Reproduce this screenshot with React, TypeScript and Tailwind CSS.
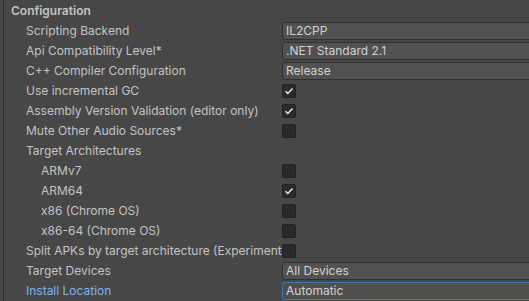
import React from "react";

type Row =
  | { label: string; indent?: boolean; kind: "dropdown"; value: string; focused?: boolean }
  | { label: string; indent?: boolean; kind: "check"; checked: boolean }
  | { label: string; indent?: boolean; kind: "none" };

const rows: Row[] = [
  { label: "Scripting Backend", kind: "dropdown", value: "IL2CPP" },
  { label: "Api Compatibility Level*", kind: "dropdown", value: ".NET Standard 2.1" },
  { label: "C++ Compiler Configuration", kind: "dropdown", value: "Release" },
  { label: "Use incremental GC", kind: "check", checked: true },
  { label: "Assembly Version Validation (editor only)", kind: "check", checked: true },
  { label: "Mute Other Audio Sources*", kind: "check", checked: false },
  { label: "Target Architectures", kind: "none" },
  { label: "ARMv7", indent: true, kind: "check", checked: false },
  { label: "ARM64", indent: true, kind: "check", checked: true },
  { label: "x86 (Chrome OS)", indent: true, kind: "check", checked: false },
  { label: "x86-64 (Chrome OS)", indent: true, kind: "check", checked: false },
  { label: "Split APKs by target architecture (Experimental)", kind: "check", checked: false },
  { label: "Target Devices", kind: "dropdown", value: "All Devices" },
  { label: "Install Location", kind: "dropdown", value: "Automatic", focused: true },
];

function Checkbox({ checked }: { checked: boolean }) {
  return (
    <div className="shrink-0 w-[14px] h-[14px] rounded-[2px] bg-[#2a2a2a] border border-[#212121] flex items-center justify-center">
      {checked && (
        <svg width="10" height="10" viewBox="0 0 10 10">
          <path d="M1.5 5.2 L3.8 7.4 L8.5 2.4" stroke="#e6e6e6" strokeWidth="1.5" fill="none" />
        </svg>
      )}
    </div>
  );
}

function Dropdown({ value, focused }: { value: string; focused?: boolean }) {
  return (
    <div
      className={
        focused
          ? "shrink-0 w-[270px] h-[18px] rounded-[3px] bg-[#4f4f4f] border border-[#3a79bb] pl-[3px] flex items-center text-[#d2d2d2]"
          : "shrink-0 w-[270px] h-[18px] rounded-[3px] bg-[#515151] border border-[#303030] pl-[3px] flex items-center text-[#d2d2d2]"
      }
    >
      {value}
    </div>
  );
}

export default function App() {
  return (
    <div
      className="w-[529px] h-[301px] overflow-hidden bg-[#474747] flex text-[12px] leading-[16px]"
      style={{ fontFamily: "Inter, 'Noto Sans', sans-serif" }}
    >
      <div className="shrink-0 w-[3px]" />
      <div className="shrink-0 w-px bg-[#2e2e2e]" />
      <div className="shrink-0 w-[525px] flex flex-col">
        <div className="h-[21px] pl-[7px] flex items-center font-semibold text-[#c4c4c4]">Configuration</div>
        {rows.map((r) => (
          <div key={r.label} className="h-[20px] flex items-center">
            <div
              className={
                (r.indent ? "pl-[37px] " : "pl-[22px] ") +
                "shrink-0 w-[278px] whitespace-nowrap overflow-hidden " +
                (r.kind === "dropdown" && r.focused ? "text-[#7cb2f2]" : "text-[#c4c4c4]")
              }
            >
              {r.label}
            </div>
            {r.kind === "dropdown" && <Dropdown value={r.value} focused={r.focused} />}
            {r.kind === "check" && <Checkbox checked={r.checked} />}
          </div>
        ))}
      </div>
    </div>
  );
}
